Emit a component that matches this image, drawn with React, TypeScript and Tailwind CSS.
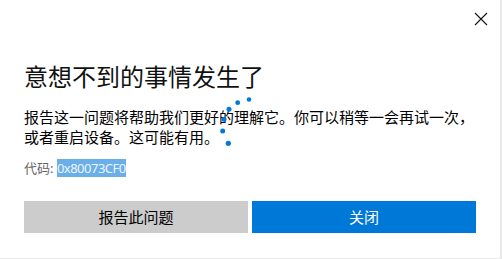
import React from "react";

export default function App() {
  const dots: [number, number, number][] = [
    [249, 99.5, 2.3],
    [237.7, 102.7, 2.4],
    [229, 109.3, 2.5],
    [224, 119.3, 2.5],
    [222.7, 131, 2.5],
    [228.3, 143.3, 2.6],
  ];
  return (
    <div
      className="w-[502px] h-[259px] bg-[#e8e8e8] overflow-hidden"
      style={{ fontFamily: '"Noto Sans", "Noto Sans CJK SC", sans-serif' }}
    >
      <div className="relative w-[500px] h-[258px] bg-white px-6 pt-[61px]">
        <button className="absolute left-[468px] top-[12px] w-[25px] h-[13px] flex items-center justify-center">
          <svg width="14" height="14" viewBox="0 0 14 14">
            <path d="M1 1 L13 13 M13 1 L1 13" stroke="#111" strokeWidth="1.1" fill="none" />
          </svg>
        </button>
        <h1 className="text-[24px] leading-[32px] text-[#111] font-normal">意想不到的事情发生了</h1>
        <p className="mt-[14px] text-[15px] leading-[20px] text-black">
          报告这一问题将帮助我们更好的理解它。你可以稍等一会再试一次，或者重启设备。这可能有用。
        </p>
        <div className="mt-[12px] text-[13px] leading-[18px] text-[#666]">
          代码: <span className="bg-[#6aaeea] text-[#eef6fd] tracking-[-0.5px]">0x80073CF0</span>
        </div>
        <div className="mt-[24px] flex gap-1">
          <button className="w-[224px] h-8 bg-[#cccccc] text-[15px] text-black">报告此问题</button>
          <button className="w-[224px] h-8 bg-[#0078d7] text-[15px] text-white">关闭</button>
        </div>
        <svg className="absolute left-0 top-0 pointer-events-none" width="500" height="258">
          {dots.map(([x, y, r], i) => (
            <circle key={i} cx={x} cy={y} r={r} fill="#0078d7" />
          ))}
        </svg>
      </div>
    </div>
  );
}
